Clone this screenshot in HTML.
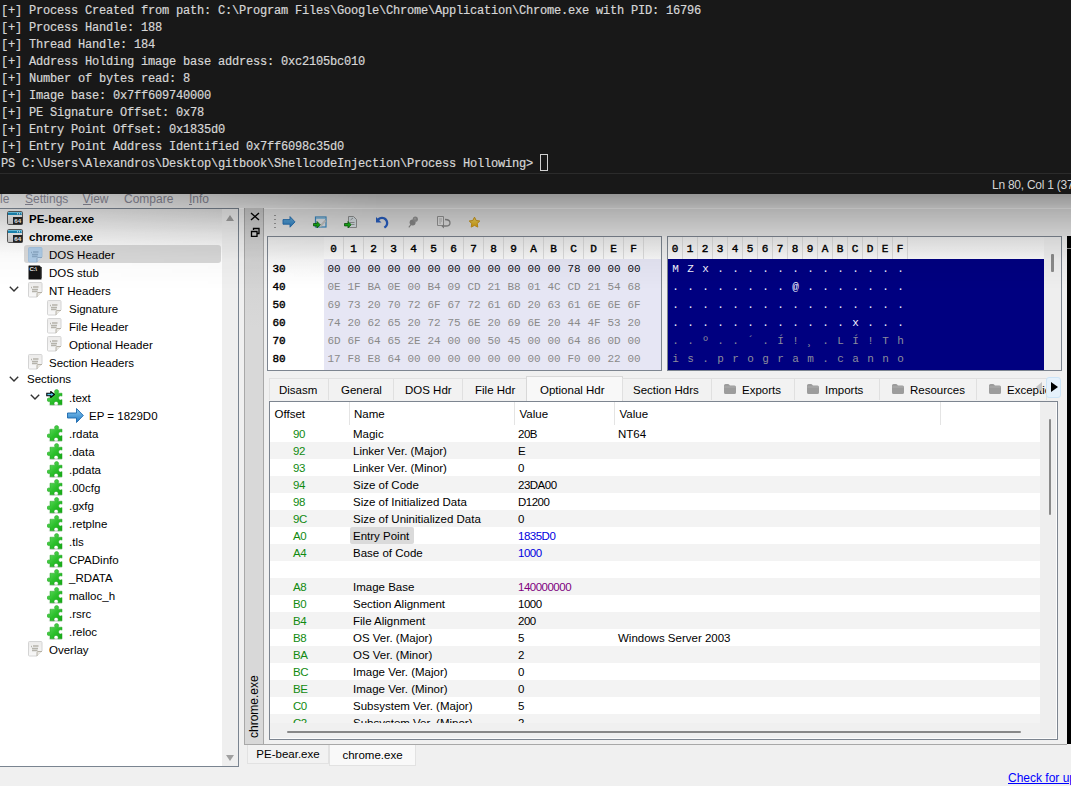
<!DOCTYPE html>
<html><head><meta charset="utf-8">
<style>
*{margin:0;padding:0;box-sizing:border-box}
html,body{width:1071px;height:786px;overflow:hidden;background:#f0f0f0;position:relative;font-family:"Liberation Sans",sans-serif;font-size:12px;color:#000}
.a{position:absolute}
#term{left:0;top:0;width:1071px;height:194px;background:#181818}
.tl{position:absolute;left:1px;font-family:"Liberation Mono",monospace;font-size:12px;letter-spacing:-0.2px;color:#d6d6d6;-webkit-text-stroke:0.2px #d6d6d6;white-space:pre;line-height:17px}
#tsep{left:0;top:173px;width:1071px;height:1px;background:#2b2b2b}
#tstat{left:992px;top:178px;color:#d4d4d4;font-size:12px;letter-spacing:-0.25px;white-space:pre}
#menu{left:0;top:194px;width:1071px;height:14px;background:#ececec;overflow:hidden}
#menu span{position:absolute;top:-2.5px;color:#8a8a98;font-size:12px;line-height:14px}
#menu u{text-decoration:none;position:relative;display:inline-block}
#menu u:after{content:"";position:absolute;left:0;right:0;top:12px;height:1px;background:#8a8a98}
#mline{left:0;top:208px;width:239px;height:1px;background:#4a5566}
#mline2{left:239px;top:208px;width:832px;height:1px;background:#fafafa}
#shadow{left:0;top:194px;width:1071px;height:100px;pointer-events:none;background:linear-gradient(rgba(0,0,0,.37) 0px,rgba(0,0,0,.25) 14px,rgba(0,0,0,.11) 42px,rgba(0,0,0,.03) 66px,rgba(0,0,0,0) 96px);-webkit-mask-image:linear-gradient(to right,rgba(0,0,0,.45),#000 380px)}
#tree{left:0;top:208px;width:239px;height:559px;background:linear-gradient(#e4e4e4 0px,#ffffff 45px);border:1px solid #7a8490;border-left:none;overflow:hidden}
.tt{position:absolute;white-space:pre;font-size:11.5px;line-height:16px;color:#000}
.b{font-weight:bold}
#vstrip{left:244px;top:208px;width:20px;height:537px;background:linear-gradient(#cdcdcd,#d8d8d8 120px);border:1px solid #a8a8a8;border-top:none}
#main{left:264px;top:209px;width:807px;height:536px;background:linear-gradient(#e8e8e8,#e8e8e8 27px,#f0f0f0 28px)}
#hexl{left:267px;top:236px;width:395px;height:135px;border:1px solid #7d8590;background:#e6e6f4;overflow:hidden}
#hexr{left:667px;top:236px;width:395px;height:135px;border:1px solid #7d8590;background:#000080;overflow:hidden}
.hh{position:absolute;height:22px;line-height:24px;text-align:center;font-family:"Liberation Mono",monospace;font-size:11px;color:#000;-webkit-text-stroke:0.4px #000;background:linear-gradient(#f0f0f0,#fafafa);border-right:1px solid #dcdcdc}
.ha{position:absolute;font-family:"Liberation Mono",monospace;font-size:11px;line-height:18px;color:#000;-webkit-text-stroke:0.4px #000}
.hd{position:absolute;font-family:"Liberation Mono",monospace;font-size:11px;line-height:18px;color:#8a8a8a;white-space:pre}
.hd.dk{color:#101018}
.ac{position:absolute;width:15px;text-align:center;font-family:"Liberation Mono",monospace;font-size:11px;line-height:18px;color:#8c8c9c}
.ac.br{color:#f4f4ff}
.tab{position:absolute;overflow:hidden;top:378px;height:22px;background:#f2f2f2;border:1px solid #e0e0e0;border-bottom:none;font-size:11.5px;line-height:23px;white-space:pre;color:#000}
.tab.sel{top:376px;height:25px;background:#f8f8f8;border-color:#d8d8d8}
#tbl{left:269px;top:401px;width:789px;height:339px;border:1px solid #7d8590;background:#f0f0f0;overflow:hidden}
.th{position:absolute;top:3.5px;font-size:11.5px;line-height:16px;white-space:pre}
.tsep{position:absolute;top:0px;width:1px;height:23px;background:#e4e4e4}
.tr{position:absolute;left:0;width:771px;height:17px}
.to,.tn{position:absolute;top:1px;font-size:11.5px;line-height:17px;white-space:pre}
.tv{letter-spacing:-0.5px}
.to{color:#108a10}
.btab{position:absolute;top:744px;height:20px;border:1px solid #e2e2e2;border-top:none;font-size:11.5px;line-height:21px;white-space:pre;text-align:center}
</style></head><body>
<div class="a" id="term">
<div class="tl" style="top:3px">[+] Process Created from path: C:\Program Files\Google\Chrome\Application\Chrome.exe with PID: 16796</div>
<div class="tl" style="top:20px">[+] Process Handle: 188</div>
<div class="tl" style="top:37px">[+] Thread Handle: 184</div>
<div class="tl" style="top:54px">[+] Address Holding image base address: 0xc2105bc010</div>
<div class="tl" style="top:71px">[+] Number of bytes read: 8</div>
<div class="tl" style="top:88px">[+] Image base: 0x7ff609740000</div>
<div class="tl" style="top:105px">[+] PE Signature Offset: 0x78</div>
<div class="tl" style="top:122px">[+] Entry Point Offset: 0x1835d0</div>
<div class="tl" style="top:139px">[+] Entry Point Address Identified 0x7ff6098c35d0</div>
<div class="tl" style="top:156px">PS C:\Users\Alexandros\Desktop\gitbook\ShellcodeInjection\Process Hollowing&gt; </div>
<div class="a" style="left:540px;top:154px;width:8px;height:17px;border:1px solid #d0d0d0"></div>
<div class="a" id="tsep"></div>
<div class="a" id="tstat">Ln 80, Col 1 (37</div>
</div>
<div class="a" id="menu">
<span style="left:0px">le</span>
<span style="left:25px"><u>S</u>ettings</span>
<span style="left:82.5px"><u>V</u>iew</span>
<span style="left:124px">Compare</span>
<span style="left:189px"><u>I</u>nfo</span>
</div>
<div class="a" id="mline"></div><div class="a" id="mline2"></div>
<div class="a" id="tree">
<div class="a" style="left:0;top:-209px;width:239px;height:786px">
<div class="a" style="left:7px;top:211.0px;line-height:0"><svg width="17" height="15" viewBox="0 0 17 15"><defs><linearGradient id="wg" x1="0" y1="0" x2="0" y2="1"><stop offset="0" stop-color="#f4f4f4"/><stop offset="1" stop-color="#c8c8c8"/></linearGradient></defs><rect x="0.5" y="0.5" width="15" height="13" rx="1.2" fill="url(#wg)" stroke="#5a5a5a"/><rect x="1" y="1" width="14" height="3" fill="#1a8ab8"/><path d="M1 1.5h14" stroke="#6cc4e4" stroke-width="1"/><path d="M10 2.8h1M12 2.8h1M14 2.8h0.8" stroke="#fff" stroke-width="1"/><rect x="6" y="6" width="9.5" height="7.5" fill="#262626"/><text x="10.8" y="12.4" font-family="Liberation Sans" font-weight="bold" font-size="6.2" fill="#f4f4f4" text-anchor="middle">64</text></svg></div><div class="tt b" style="left:29px;top:210.5px">PE-bear.exe</div>
<div class="a" style="left:7px;top:229.0px;line-height:0"><svg width="17" height="15" viewBox="0 0 17 15"><defs><linearGradient id="wg" x1="0" y1="0" x2="0" y2="1"><stop offset="0" stop-color="#f4f4f4"/><stop offset="1" stop-color="#c8c8c8"/></linearGradient></defs><rect x="0.5" y="0.5" width="15" height="13" rx="1.2" fill="url(#wg)" stroke="#5a5a5a"/><rect x="1" y="1" width="14" height="3" fill="#1a8ab8"/><path d="M1 1.5h14" stroke="#6cc4e4" stroke-width="1"/><path d="M10 2.8h1M12 2.8h1M14 2.8h0.8" stroke="#fff" stroke-width="1"/><rect x="6" y="6" width="9.5" height="7.5" fill="#262626"/><text x="10.8" y="12.4" font-family="Liberation Sans" font-weight="bold" font-size="6.2" fill="#f4f4f4" text-anchor="middle">64</text></svg></div><div class="tt b" style="left:29px;top:228.5px">chrome.exe</div>
<div class="a" style="left:24px;top:244.5px;width:197px;height:18.5px;background:#d9d9d9;border-radius:3px"></div>
<div class="a" style="left:28px;top:246.5px;line-height:0"><svg width="15" height="16" viewBox="0 0 15 16"><path d="M1.5 0.5h11.5q1 0 1 1v8.5l-5 5h-7.5q-1 0-1-1v-12.5q0-1 1-1z" fill="#aecbe6" stroke="#a4c2de"/><path d="M3 5.5h1M5 5h5.5M4 7.5h6M4 9.5h5.5" stroke="#8aa8c4" stroke-width="1.3"/><path d="M9 15v-3.5q0-1 1-1h4" fill="#c8dcee" stroke="#88a4c0" stroke-width=".9"/></svg></div><div class="tt" style="left:49px;top:246.5px">DOS Header</div>
<div class="a" style="left:28px;top:265.0px;line-height:0"><svg width="14" height="15" viewBox="0 0 14 15"><path d="M1 0.5h10.5l2 2v11.5q0 0.5-.5.5h-12q-.5 0-.5-.5v-13q0-.5.5-.5z" fill="#141414"/><path d="M13 2v11" stroke="#2a2a2a"/><text x="1.5" y="6.3" font-family="Liberation Sans" font-weight="bold" font-size="6" fill="#f0f0f0" letter-spacing="-0.3">C:\</text></svg></div><div class="tt" style="left:49px;top:264.5px">DOS stub</div>
<div class="a" style="left:9px;top:286.0px;line-height:0"><svg width="10" height="6" viewBox="0 0 10 6"><path d="M0.8 0.8l4.2 4.2 4.2-4.2" stroke="#333" stroke-width="1.4" fill="none"/></svg></div><div class="a" style="left:28px;top:282.0px;line-height:0"><svg width="15" height="16" viewBox="0 0 15 16"><defs><linearGradient id="dg" x1="0" y1="0" x2="0" y2="1"><stop offset="0" stop-color="#ecebea"/><stop offset="1" stop-color="#f8f8f8"/></linearGradient></defs><path d="M1.5 0.5h11.5q1 0 1 1v8.5l-5 5h-7.5q-1 0-1-1v-12.5q0-1 1-1z" fill="url(#dg)" stroke="#d4d4d4"/><path d="M3 5.5h1M5 5h5.5M4 7.5h6M4 9.5h5.5" stroke="#b5b3ab" stroke-width="1.3"/><path d="M9 15v-3.5q0-1 1-1h4" fill="#e8e6e0" stroke="#b0aca0" stroke-width=".9"/></svg></div><div class="tt" style="left:49px;top:282.5px">NT Headers</div>
<div class="a" style="left:47px;top:300.0px;line-height:0"><svg width="15" height="16" viewBox="0 0 15 16"><defs><linearGradient id="dg" x1="0" y1="0" x2="0" y2="1"><stop offset="0" stop-color="#ecebea"/><stop offset="1" stop-color="#f8f8f8"/></linearGradient></defs><path d="M1.5 0.5h11.5q1 0 1 1v8.5l-5 5h-7.5q-1 0-1-1v-12.5q0-1 1-1z" fill="url(#dg)" stroke="#d4d4d4"/><path d="M3 5.5h1M5 5h5.5M4 7.5h6M4 9.5h5.5" stroke="#b5b3ab" stroke-width="1.3"/><path d="M9 15v-3.5q0-1 1-1h4" fill="#e8e6e0" stroke="#b0aca0" stroke-width=".9"/></svg></div><div class="tt" style="left:69px;top:300.5px">Signature</div>
<div class="a" style="left:47px;top:318.0px;line-height:0"><svg width="15" height="16" viewBox="0 0 15 16"><defs><linearGradient id="dg" x1="0" y1="0" x2="0" y2="1"><stop offset="0" stop-color="#ecebea"/><stop offset="1" stop-color="#f8f8f8"/></linearGradient></defs><path d="M1.5 0.5h11.5q1 0 1 1v8.5l-5 5h-7.5q-1 0-1-1v-12.5q0-1 1-1z" fill="url(#dg)" stroke="#d4d4d4"/><path d="M3 5.5h1M5 5h5.5M4 7.5h6M4 9.5h5.5" stroke="#b5b3ab" stroke-width="1.3"/><path d="M9 15v-3.5q0-1 1-1h4" fill="#e8e6e0" stroke="#b0aca0" stroke-width=".9"/></svg></div><div class="tt" style="left:69px;top:318.5px">File Header</div>
<div class="a" style="left:47px;top:336.0px;line-height:0"><svg width="15" height="16" viewBox="0 0 15 16"><defs><linearGradient id="dg" x1="0" y1="0" x2="0" y2="1"><stop offset="0" stop-color="#ecebea"/><stop offset="1" stop-color="#f8f8f8"/></linearGradient></defs><path d="M1.5 0.5h11.5q1 0 1 1v8.5l-5 5h-7.5q-1 0-1-1v-12.5q0-1 1-1z" fill="url(#dg)" stroke="#d4d4d4"/><path d="M3 5.5h1M5 5h5.5M4 7.5h6M4 9.5h5.5" stroke="#b5b3ab" stroke-width="1.3"/><path d="M9 15v-3.5q0-1 1-1h4" fill="#e8e6e0" stroke="#b0aca0" stroke-width=".9"/></svg></div><div class="tt" style="left:69px;top:336.5px">Optional Header</div>
<div class="a" style="left:28px;top:354.0px;line-height:0"><svg width="15" height="16" viewBox="0 0 15 16"><defs><linearGradient id="dg" x1="0" y1="0" x2="0" y2="1"><stop offset="0" stop-color="#ecebea"/><stop offset="1" stop-color="#f8f8f8"/></linearGradient></defs><path d="M1.5 0.5h11.5q1 0 1 1v8.5l-5 5h-7.5q-1 0-1-1v-12.5q0-1 1-1z" fill="url(#dg)" stroke="#d4d4d4"/><path d="M3 5.5h1M5 5h5.5M4 7.5h6M4 9.5h5.5" stroke="#b5b3ab" stroke-width="1.3"/><path d="M9 15v-3.5q0-1 1-1h4" fill="#e8e6e0" stroke="#b0aca0" stroke-width=".9"/></svg></div><div class="tt" style="left:49px;top:354.5px">Section Headers</div>
<div class="a" style="left:9px;top:376.0px;line-height:0"><svg width="10" height="6" viewBox="0 0 10 6"><path d="M0.8 0.8l4.2 4.2 4.2-4.2" stroke="#333" stroke-width="1.4" fill="none"/></svg></div><div class="tt" style="left:27px;top:371.0px">Sections</div>
<div class="a" style="left:30px;top:394.0px;line-height:0"><svg width="10" height="6" viewBox="0 0 10 6"><path d="M0.8 0.8l4.2 4.2 4.2-4.2" stroke="#333" stroke-width="1.4" fill="none"/></svg></div><div class="a" style="left:47px;top:388.5px;line-height:0"><svg width="17" height="17" viewBox="0 0 17 17"><defs><linearGradient id="pg" x1="0" y1="0" x2="1" y2="1"><stop offset="0" stop-color="#6ee06e"/><stop offset=".55" stop-color="#2cc02c"/><stop offset="1" stop-color="#14a814"/></linearGradient></defs><ellipse cx="8.5" cy="16" rx="7" ry="1" fill="#000" opacity=".12"/><path d="M3 4.2h5.2c-.5-.5-.7-1-.7-1.6 0-1.2 1-2.1 2.1-2.1s2.1.9 2.1 2.1c0 .6-.2 1.1-.7 1.6h4v3c-.4-.3-.8-.4-1.3-.4-1.2 0-2.1.9-2.1 2.1s.9 2.1 2.1 2.1c.5 0 .9-.1 1.3-.4v5.2h-4.2c.3-.4.4-.8.4-1.3 0-1.2-.9-2.1-2.1-2.1s-2.1.9-2.1 2.1c0 .5.1.9.4 1.3H3v-3.6c-.4.3-.8.4-1.2.4-1.1 0-1.8-.8-1.8-1.8s.7-1.9 1.8-1.9c.4 0 .8.1 1.2.4z" fill="url(#pg)" stroke="#22a022" stroke-width=".5"/></svg></div><div class="tt" style="left:69px;top:389.5px">.text</div>
<div class="a" style="left:46px;top:391px;line-height:0"><svg width="9" height="7" viewBox="0 0 9 7"><path d="M0.8 2.3h4v-1.8l3.6 3-3.6 3v-1.8h-4z" fill="#5ac8f0" stroke="#000" stroke-width="1.1"/></svg></div>
<div class="a" style="left:67px;top:408.0px;line-height:0"><svg width="17" height="15" viewBox="0 0 17 15"><defs><linearGradient id="ag" x1="0" y1="0" x2="0" y2="1"><stop offset="0" stop-color="#8ccbf2"/><stop offset="1" stop-color="#1f78c4"/></linearGradient></defs><path d="M0.5 5h9v-4.5l6.8 7-6.8 7v-4.5h-9z" fill="url(#ag)" stroke="#1a66ac" stroke-width=".9"/></svg></div><div class="tt" style="left:89px;top:407.5px">EP = 1829D0</div>
<div class="a" style="left:47px;top:424.5px;line-height:0"><svg width="17" height="17" viewBox="0 0 17 17"><defs><linearGradient id="pg" x1="0" y1="0" x2="1" y2="1"><stop offset="0" stop-color="#6ee06e"/><stop offset=".55" stop-color="#2cc02c"/><stop offset="1" stop-color="#14a814"/></linearGradient></defs><ellipse cx="8.5" cy="16" rx="7" ry="1" fill="#000" opacity=".12"/><path d="M3 4.2h5.2c-.5-.5-.7-1-.7-1.6 0-1.2 1-2.1 2.1-2.1s2.1.9 2.1 2.1c0 .6-.2 1.1-.7 1.6h4v3c-.4-.3-.8-.4-1.3-.4-1.2 0-2.1.9-2.1 2.1s.9 2.1 2.1 2.1c.5 0 .9-.1 1.3-.4v5.2h-4.2c.3-.4.4-.8.4-1.3 0-1.2-.9-2.1-2.1-2.1s-2.1.9-2.1 2.1c0 .5.1.9.4 1.3H3v-3.6c-.4.3-.8.4-1.2.4-1.1 0-1.8-.8-1.8-1.8s.7-1.9 1.8-1.9c.4 0 .8.1 1.2.4z" fill="url(#pg)" stroke="#22a022" stroke-width=".5"/></svg></div><div class="tt" style="left:69px;top:425.5px">.rdata</div>
<div class="a" style="left:47px;top:442.5px;line-height:0"><svg width="17" height="17" viewBox="0 0 17 17"><defs><linearGradient id="pg" x1="0" y1="0" x2="1" y2="1"><stop offset="0" stop-color="#6ee06e"/><stop offset=".55" stop-color="#2cc02c"/><stop offset="1" stop-color="#14a814"/></linearGradient></defs><ellipse cx="8.5" cy="16" rx="7" ry="1" fill="#000" opacity=".12"/><path d="M3 4.2h5.2c-.5-.5-.7-1-.7-1.6 0-1.2 1-2.1 2.1-2.1s2.1.9 2.1 2.1c0 .6-.2 1.1-.7 1.6h4v3c-.4-.3-.8-.4-1.3-.4-1.2 0-2.1.9-2.1 2.1s.9 2.1 2.1 2.1c.5 0 .9-.1 1.3-.4v5.2h-4.2c.3-.4.4-.8.4-1.3 0-1.2-.9-2.1-2.1-2.1s-2.1.9-2.1 2.1c0 .5.1.9.4 1.3H3v-3.6c-.4.3-.8.4-1.2.4-1.1 0-1.8-.8-1.8-1.8s.7-1.9 1.8-1.9c.4 0 .8.1 1.2.4z" fill="url(#pg)" stroke="#22a022" stroke-width=".5"/></svg></div><div class="tt" style="left:69px;top:443.5px">.data</div>
<div class="a" style="left:47px;top:460.5px;line-height:0"><svg width="17" height="17" viewBox="0 0 17 17"><defs><linearGradient id="pg" x1="0" y1="0" x2="1" y2="1"><stop offset="0" stop-color="#6ee06e"/><stop offset=".55" stop-color="#2cc02c"/><stop offset="1" stop-color="#14a814"/></linearGradient></defs><ellipse cx="8.5" cy="16" rx="7" ry="1" fill="#000" opacity=".12"/><path d="M3 4.2h5.2c-.5-.5-.7-1-.7-1.6 0-1.2 1-2.1 2.1-2.1s2.1.9 2.1 2.1c0 .6-.2 1.1-.7 1.6h4v3c-.4-.3-.8-.4-1.3-.4-1.2 0-2.1.9-2.1 2.1s.9 2.1 2.1 2.1c.5 0 .9-.1 1.3-.4v5.2h-4.2c.3-.4.4-.8.4-1.3 0-1.2-.9-2.1-2.1-2.1s-2.1.9-2.1 2.1c0 .5.1.9.4 1.3H3v-3.6c-.4.3-.8.4-1.2.4-1.1 0-1.8-.8-1.8-1.8s.7-1.9 1.8-1.9c.4 0 .8.1 1.2.4z" fill="url(#pg)" stroke="#22a022" stroke-width=".5"/></svg></div><div class="tt" style="left:69px;top:461.5px">.pdata</div>
<div class="a" style="left:47px;top:478.5px;line-height:0"><svg width="17" height="17" viewBox="0 0 17 17"><defs><linearGradient id="pg" x1="0" y1="0" x2="1" y2="1"><stop offset="0" stop-color="#6ee06e"/><stop offset=".55" stop-color="#2cc02c"/><stop offset="1" stop-color="#14a814"/></linearGradient></defs><ellipse cx="8.5" cy="16" rx="7" ry="1" fill="#000" opacity=".12"/><path d="M3 4.2h5.2c-.5-.5-.7-1-.7-1.6 0-1.2 1-2.1 2.1-2.1s2.1.9 2.1 2.1c0 .6-.2 1.1-.7 1.6h4v3c-.4-.3-.8-.4-1.3-.4-1.2 0-2.1.9-2.1 2.1s.9 2.1 2.1 2.1c.5 0 .9-.1 1.3-.4v5.2h-4.2c.3-.4.4-.8.4-1.3 0-1.2-.9-2.1-2.1-2.1s-2.1.9-2.1 2.1c0 .5.1.9.4 1.3H3v-3.6c-.4.3-.8.4-1.2.4-1.1 0-1.8-.8-1.8-1.8s.7-1.9 1.8-1.9c.4 0 .8.1 1.2.4z" fill="url(#pg)" stroke="#22a022" stroke-width=".5"/></svg></div><div class="tt" style="left:69px;top:479.5px">.00cfg</div>
<div class="a" style="left:47px;top:496.5px;line-height:0"><svg width="17" height="17" viewBox="0 0 17 17"><defs><linearGradient id="pg" x1="0" y1="0" x2="1" y2="1"><stop offset="0" stop-color="#6ee06e"/><stop offset=".55" stop-color="#2cc02c"/><stop offset="1" stop-color="#14a814"/></linearGradient></defs><ellipse cx="8.5" cy="16" rx="7" ry="1" fill="#000" opacity=".12"/><path d="M3 4.2h5.2c-.5-.5-.7-1-.7-1.6 0-1.2 1-2.1 2.1-2.1s2.1.9 2.1 2.1c0 .6-.2 1.1-.7 1.6h4v3c-.4-.3-.8-.4-1.3-.4-1.2 0-2.1.9-2.1 2.1s.9 2.1 2.1 2.1c.5 0 .9-.1 1.3-.4v5.2h-4.2c.3-.4.4-.8.4-1.3 0-1.2-.9-2.1-2.1-2.1s-2.1.9-2.1 2.1c0 .5.1.9.4 1.3H3v-3.6c-.4.3-.8.4-1.2.4-1.1 0-1.8-.8-1.8-1.8s.7-1.9 1.8-1.9c.4 0 .8.1 1.2.4z" fill="url(#pg)" stroke="#22a022" stroke-width=".5"/></svg></div><div class="tt" style="left:69px;top:497.5px">.gxfg</div>
<div class="a" style="left:47px;top:514.5px;line-height:0"><svg width="17" height="17" viewBox="0 0 17 17"><defs><linearGradient id="pg" x1="0" y1="0" x2="1" y2="1"><stop offset="0" stop-color="#6ee06e"/><stop offset=".55" stop-color="#2cc02c"/><stop offset="1" stop-color="#14a814"/></linearGradient></defs><ellipse cx="8.5" cy="16" rx="7" ry="1" fill="#000" opacity=".12"/><path d="M3 4.2h5.2c-.5-.5-.7-1-.7-1.6 0-1.2 1-2.1 2.1-2.1s2.1.9 2.1 2.1c0 .6-.2 1.1-.7 1.6h4v3c-.4-.3-.8-.4-1.3-.4-1.2 0-2.1.9-2.1 2.1s.9 2.1 2.1 2.1c.5 0 .9-.1 1.3-.4v5.2h-4.2c.3-.4.4-.8.4-1.3 0-1.2-.9-2.1-2.1-2.1s-2.1.9-2.1 2.1c0 .5.1.9.4 1.3H3v-3.6c-.4.3-.8.4-1.2.4-1.1 0-1.8-.8-1.8-1.8s.7-1.9 1.8-1.9c.4 0 .8.1 1.2.4z" fill="url(#pg)" stroke="#22a022" stroke-width=".5"/></svg></div><div class="tt" style="left:69px;top:515.5px">.retplne</div>
<div class="a" style="left:47px;top:532.5px;line-height:0"><svg width="17" height="17" viewBox="0 0 17 17"><defs><linearGradient id="pg" x1="0" y1="0" x2="1" y2="1"><stop offset="0" stop-color="#6ee06e"/><stop offset=".55" stop-color="#2cc02c"/><stop offset="1" stop-color="#14a814"/></linearGradient></defs><ellipse cx="8.5" cy="16" rx="7" ry="1" fill="#000" opacity=".12"/><path d="M3 4.2h5.2c-.5-.5-.7-1-.7-1.6 0-1.2 1-2.1 2.1-2.1s2.1.9 2.1 2.1c0 .6-.2 1.1-.7 1.6h4v3c-.4-.3-.8-.4-1.3-.4-1.2 0-2.1.9-2.1 2.1s.9 2.1 2.1 2.1c.5 0 .9-.1 1.3-.4v5.2h-4.2c.3-.4.4-.8.4-1.3 0-1.2-.9-2.1-2.1-2.1s-2.1.9-2.1 2.1c0 .5.1.9.4 1.3H3v-3.6c-.4.3-.8.4-1.2.4-1.1 0-1.8-.8-1.8-1.8s.7-1.9 1.8-1.9c.4 0 .8.1 1.2.4z" fill="url(#pg)" stroke="#22a022" stroke-width=".5"/></svg></div><div class="tt" style="left:69px;top:533.5px">.tls</div>
<div class="a" style="left:47px;top:550.5px;line-height:0"><svg width="17" height="17" viewBox="0 0 17 17"><defs><linearGradient id="pg" x1="0" y1="0" x2="1" y2="1"><stop offset="0" stop-color="#6ee06e"/><stop offset=".55" stop-color="#2cc02c"/><stop offset="1" stop-color="#14a814"/></linearGradient></defs><ellipse cx="8.5" cy="16" rx="7" ry="1" fill="#000" opacity=".12"/><path d="M3 4.2h5.2c-.5-.5-.7-1-.7-1.6 0-1.2 1-2.1 2.1-2.1s2.1.9 2.1 2.1c0 .6-.2 1.1-.7 1.6h4v3c-.4-.3-.8-.4-1.3-.4-1.2 0-2.1.9-2.1 2.1s.9 2.1 2.1 2.1c.5 0 .9-.1 1.3-.4v5.2h-4.2c.3-.4.4-.8.4-1.3 0-1.2-.9-2.1-2.1-2.1s-2.1.9-2.1 2.1c0 .5.1.9.4 1.3H3v-3.6c-.4.3-.8.4-1.2.4-1.1 0-1.8-.8-1.8-1.8s.7-1.9 1.8-1.9c.4 0 .8.1 1.2.4z" fill="url(#pg)" stroke="#22a022" stroke-width=".5"/></svg></div><div class="tt" style="left:69px;top:551.5px">CPADinfo</div>
<div class="a" style="left:47px;top:568.5px;line-height:0"><svg width="17" height="17" viewBox="0 0 17 17"><defs><linearGradient id="pg" x1="0" y1="0" x2="1" y2="1"><stop offset="0" stop-color="#6ee06e"/><stop offset=".55" stop-color="#2cc02c"/><stop offset="1" stop-color="#14a814"/></linearGradient></defs><ellipse cx="8.5" cy="16" rx="7" ry="1" fill="#000" opacity=".12"/><path d="M3 4.2h5.2c-.5-.5-.7-1-.7-1.6 0-1.2 1-2.1 2.1-2.1s2.1.9 2.1 2.1c0 .6-.2 1.1-.7 1.6h4v3c-.4-.3-.8-.4-1.3-.4-1.2 0-2.1.9-2.1 2.1s.9 2.1 2.1 2.1c.5 0 .9-.1 1.3-.4v5.2h-4.2c.3-.4.4-.8.4-1.3 0-1.2-.9-2.1-2.1-2.1s-2.1.9-2.1 2.1c0 .5.1.9.4 1.3H3v-3.6c-.4.3-.8.4-1.2.4-1.1 0-1.8-.8-1.8-1.8s.7-1.9 1.8-1.9c.4 0 .8.1 1.2.4z" fill="url(#pg)" stroke="#22a022" stroke-width=".5"/></svg></div><div class="tt" style="left:69px;top:569.5px">_RDATA</div>
<div class="a" style="left:47px;top:586.5px;line-height:0"><svg width="17" height="17" viewBox="0 0 17 17"><defs><linearGradient id="pg" x1="0" y1="0" x2="1" y2="1"><stop offset="0" stop-color="#6ee06e"/><stop offset=".55" stop-color="#2cc02c"/><stop offset="1" stop-color="#14a814"/></linearGradient></defs><ellipse cx="8.5" cy="16" rx="7" ry="1" fill="#000" opacity=".12"/><path d="M3 4.2h5.2c-.5-.5-.7-1-.7-1.6 0-1.2 1-2.1 2.1-2.1s2.1.9 2.1 2.1c0 .6-.2 1.1-.7 1.6h4v3c-.4-.3-.8-.4-1.3-.4-1.2 0-2.1.9-2.1 2.1s.9 2.1 2.1 2.1c.5 0 .9-.1 1.3-.4v5.2h-4.2c.3-.4.4-.8.4-1.3 0-1.2-.9-2.1-2.1-2.1s-2.1.9-2.1 2.1c0 .5.1.9.4 1.3H3v-3.6c-.4.3-.8.4-1.2.4-1.1 0-1.8-.8-1.8-1.8s.7-1.9 1.8-1.9c.4 0 .8.1 1.2.4z" fill="url(#pg)" stroke="#22a022" stroke-width=".5"/></svg></div><div class="tt" style="left:69px;top:587.5px">malloc_h</div>
<div class="a" style="left:47px;top:604.5px;line-height:0"><svg width="17" height="17" viewBox="0 0 17 17"><defs><linearGradient id="pg" x1="0" y1="0" x2="1" y2="1"><stop offset="0" stop-color="#6ee06e"/><stop offset=".55" stop-color="#2cc02c"/><stop offset="1" stop-color="#14a814"/></linearGradient></defs><ellipse cx="8.5" cy="16" rx="7" ry="1" fill="#000" opacity=".12"/><path d="M3 4.2h5.2c-.5-.5-.7-1-.7-1.6 0-1.2 1-2.1 2.1-2.1s2.1.9 2.1 2.1c0 .6-.2 1.1-.7 1.6h4v3c-.4-.3-.8-.4-1.3-.4-1.2 0-2.1.9-2.1 2.1s.9 2.1 2.1 2.1c.5 0 .9-.1 1.3-.4v5.2h-4.2c.3-.4.4-.8.4-1.3 0-1.2-.9-2.1-2.1-2.1s-2.1.9-2.1 2.1c0 .5.1.9.4 1.3H3v-3.6c-.4.3-.8.4-1.2.4-1.1 0-1.8-.8-1.8-1.8s.7-1.9 1.8-1.9c.4 0 .8.1 1.2.4z" fill="url(#pg)" stroke="#22a022" stroke-width=".5"/></svg></div><div class="tt" style="left:69px;top:605.5px">.rsrc</div>
<div class="a" style="left:47px;top:622.5px;line-height:0"><svg width="17" height="17" viewBox="0 0 17 17"><defs><linearGradient id="pg" x1="0" y1="0" x2="1" y2="1"><stop offset="0" stop-color="#6ee06e"/><stop offset=".55" stop-color="#2cc02c"/><stop offset="1" stop-color="#14a814"/></linearGradient></defs><ellipse cx="8.5" cy="16" rx="7" ry="1" fill="#000" opacity=".12"/><path d="M3 4.2h5.2c-.5-.5-.7-1-.7-1.6 0-1.2 1-2.1 2.1-2.1s2.1.9 2.1 2.1c0 .6-.2 1.1-.7 1.6h4v3c-.4-.3-.8-.4-1.3-.4-1.2 0-2.1.9-2.1 2.1s.9 2.1 2.1 2.1c.5 0 .9-.1 1.3-.4v5.2h-4.2c.3-.4.4-.8.4-1.3 0-1.2-.9-2.1-2.1-2.1s-2.1.9-2.1 2.1c0 .5.1.9.4 1.3H3v-3.6c-.4.3-.8.4-1.2.4-1.1 0-1.8-.8-1.8-1.8s.7-1.9 1.8-1.9c.4 0 .8.1 1.2.4z" fill="url(#pg)" stroke="#22a022" stroke-width=".5"/></svg></div><div class="tt" style="left:69px;top:623.5px">.reloc</div>
<div class="a" style="left:28px;top:641px;line-height:0"><svg width="15" height="16" viewBox="0 0 15 16"><defs><linearGradient id="dg" x1="0" y1="0" x2="0" y2="1"><stop offset="0" stop-color="#ecebea"/><stop offset="1" stop-color="#f8f8f8"/></linearGradient></defs><path d="M1.5 0.5h11.5q1 0 1 1v8.5l-5 5h-7.5q-1 0-1-1v-12.5q0-1 1-1z" fill="url(#dg)" stroke="#d4d4d4"/><path d="M3 5.5h1M5 5h5.5M4 7.5h6M4 9.5h5.5" stroke="#b5b3ab" stroke-width="1.3"/><path d="M9 15v-3.5q0-1 1-1h4" fill="#e8e6e0" stroke="#b0aca0" stroke-width=".9"/></svg></div><div class="tt" style="left:49px;top:641.5px">Overlay</div>
</div>
<div class="a" style="left:222px;top:0;width:16px;height:558px;background:#efefef"></div>
<div class="a" style="left:225.5px;top:6px;width:0;height:0;border-left:4.5px solid transparent;border-right:4.5px solid transparent;border-bottom:6px solid #a0a0a0"></div>
<div class="a" style="left:225.5px;top:546px;width:0;height:0;border-left:4.5px solid transparent;border-right:4.5px solid transparent;border-top:6px solid #a0a0a0"></div>
</div>
<div class="a" id="vstrip"></div>
<svg class="a" style="left:250px;top:212px" width="10" height="9" viewBox="0 0 10 9"><path d="M1 1l8 7M9 1l-8 7" stroke="#000" stroke-width="1.4"/></svg>
<svg class="a" style="left:250px;top:227px" width="10" height="10" viewBox="0 0 10 10"><path d="M3.5 3V1.5h5.5v5H7.5M1.5 4.5h5.5v5h-5.5z" fill="none" stroke="#000" stroke-width="1.3"/></svg>
<div class="a" style="left:247px;top:738px;transform:rotate(-90deg);transform-origin:0 0;font-size:12px;line-height:15px;white-space:pre">chrome.exe</div>
<div class="a" id="main"></div>

<div class="a" style="left:274px;top:215px;width:2px;height:15px;background:repeating-linear-gradient(#9a9a9a 0 1.5px,transparent 1.5px 4px)"></div>
<svg class="a" style="left:282px;top:216px" width="14" height="12" viewBox="0 0 14 12"><defs><linearGradient id="tba" x1="0" y1="0" x2="0" y2="1"><stop offset="0" stop-color="#6ab4e4"/><stop offset="1" stop-color="#2a7cc0"/></linearGradient></defs><path d="M1 3.6h7v-3l5 5.3-5 5.3v-3h-7z" fill="url(#tba)" stroke="#2470b4" stroke-width=".9" stroke-linejoin="round"/></svg>
<svg class="a" style="left:313px;top:216px" width="14" height="12" viewBox="0 0 14 12"><rect x="2.5" y="1" width="10.5" height="10" fill="#e4e8ec" stroke="#3a8ac4" stroke-width="1.2"/><path d="M3 2.2h9.5" stroke="#7ab8e0" stroke-width="1.2"/><path d="M7 10.5l5.5-6" stroke="#c8c8c8" stroke-width="2"/><path d="M0.5 7.5h3.5v-2l3.2 3.2-3.2 3.2v-2h-3.5z" fill="#18b818" stroke="#0a600a" stroke-width=".8"/></svg>
<svg class="a" style="left:344px;top:216px" width="14" height="12" viewBox="0 0 14 12"><path d="M4.5 0.5h5l3 3v8h-8z" fill="#dde6ea" stroke="#8c8c8c" stroke-width=".9"/><path d="M6.5 4l2.5-2M6 6.5h4.5M8 8.5h2.5" stroke="#888" stroke-width=".8"/><path d="M0.5 7.5h3.5v-2l3.2 3.2-3.2 3.2v-2h-3.5z" fill="#18b818" stroke="#0a600a" stroke-width=".8"/></svg>
<svg class="a" style="left:375px;top:216px" width="14" height="13" viewBox="0 0 14 13"><path d="M1 1v5.5h5.5L4.2 4.2C5 3.4 6 3 7 3c2.2 0 4 1.8 4 4 0 1.6-.9 3-2.3 3.7L10 12.5C12 11.4 13.3 9.4 13.3 7 13.3 3.5 10.5.7 7 .7 5.3.7 3.8 1.4 2.7 2.5z" fill="#2a62c8"/></svg>
<svg class="a" style="left:408px;top:216px" width="11" height="12" viewBox="0 0 11 12"><path d="M3 8.5L0.8 11.3" stroke="#8a8a8a" stroke-width="1.1"/><circle cx="4.6" cy="6.4" r="3" fill="#8e8e8e"/><circle cx="7.3" cy="3.2" r="2.6" fill="#9a9a9a"/><circle cx="7" cy="2.8" r="1" fill="#b0b0b0"/></svg>
<svg class="a" style="left:437px;top:216px" width="14" height="13" viewBox="0 0 14 13"><path d="M0.5 0.5h6v9h-6z" fill="#ececec" stroke="#9a9a9a"/><path d="M2 3h3M2 5h3M2 7h2" stroke="#aaa" stroke-width=".8"/><path d="M8 3.5c3 0 5 1.5 5 3.5s-2 3-4 3H6.5" fill="none" stroke="#8c8c8c" stroke-width="1.3"/><path d="M7 8l-2.5 2.2L7 12.5z" fill="#8c8c8c"/></svg>
<svg class="a" style="left:468px;top:216px" width="13" height="12" viewBox="0 0 13 12"><defs><linearGradient id="stg" x1="0" y1="0" x2="0" y2="1"><stop offset="0" stop-color="#fbe26a"/><stop offset="1" stop-color="#e2a80c"/></linearGradient></defs><path d="M6.5 1.2l1.7 3.3 3.6.5-2.6 2.5.6 3.6-3.3-1.7-3.3 1.7.6-3.6L1.2 5l3.6-.5z" fill="url(#stg)" stroke="#d09a18" stroke-width="1" stroke-linejoin="round"/></svg>

<div class="a" id="hexl">
<div class="a" style="left:-268px;top:-237px;width:1071px;height:786px">
<div class="a" style="left:268px;top:237px;width:56px;height:133px;background:linear-gradient(#ececec,#ffffff 40px)"></div>
<div class="hh" style="left:324px;top:237px;width:20px">0</div>
<div class="hh" style="left:344px;top:237px;width:20px">1</div>
<div class="hh" style="left:364px;top:237px;width:20px">2</div>
<div class="hh" style="left:384px;top:237px;width:20px">3</div>
<div class="hh" style="left:404px;top:237px;width:20px">4</div>
<div class="hh" style="left:424px;top:237px;width:20px">5</div>
<div class="hh" style="left:444px;top:237px;width:20px">6</div>
<div class="hh" style="left:464px;top:237px;width:20px">7</div>
<div class="hh" style="left:484px;top:237px;width:20px">8</div>
<div class="hh" style="left:504px;top:237px;width:20px">9</div>
<div class="hh" style="left:524px;top:237px;width:20px">A</div>
<div class="hh" style="left:544px;top:237px;width:20px">B</div>
<div class="hh" style="left:564px;top:237px;width:20px">C</div>
<div class="hh" style="left:584px;top:237px;width:20px">D</div>
<div class="hh" style="left:604px;top:237px;width:20px">E</div>
<div class="hh" style="left:624px;top:237px;width:20px">F</div>
<div class="hh" style="left:644px;top:237px;width:18px"></div>
<div class="ha" style="left:272.5px;top:260px">30</div>
<div class="hd dk" style="left:327.5px;top:260px">00</div>
<div class="hd dk" style="left:347.5px;top:260px">00</div>
<div class="hd dk" style="left:367.5px;top:260px">00</div>
<div class="hd dk" style="left:387.5px;top:260px">00</div>
<div class="hd dk" style="left:407.5px;top:260px">00</div>
<div class="hd dk" style="left:427.5px;top:260px">00</div>
<div class="hd dk" style="left:447.5px;top:260px">00</div>
<div class="hd dk" style="left:467.5px;top:260px">00</div>
<div class="hd dk" style="left:487.5px;top:260px">00</div>
<div class="hd dk" style="left:507.5px;top:260px">00</div>
<div class="hd dk" style="left:527.5px;top:260px">00</div>
<div class="hd dk" style="left:547.5px;top:260px">00</div>
<div class="hd dk" style="left:567.5px;top:260px">78</div>
<div class="hd dk" style="left:587.5px;top:260px">00</div>
<div class="hd dk" style="left:607.5px;top:260px">00</div>
<div class="hd dk" style="left:627.5px;top:260px">00</div>
<div class="ha" style="left:272.5px;top:278px">40</div>
<div class="hd" style="left:327.5px;top:278px">0E</div>
<div class="hd" style="left:347.5px;top:278px">1F</div>
<div class="hd" style="left:367.5px;top:278px">BA</div>
<div class="hd" style="left:387.5px;top:278px">0E</div>
<div class="hd" style="left:407.5px;top:278px">00</div>
<div class="hd" style="left:427.5px;top:278px">B4</div>
<div class="hd" style="left:447.5px;top:278px">09</div>
<div class="hd" style="left:467.5px;top:278px">CD</div>
<div class="hd" style="left:487.5px;top:278px">21</div>
<div class="hd" style="left:507.5px;top:278px">B8</div>
<div class="hd" style="left:527.5px;top:278px">01</div>
<div class="hd" style="left:547.5px;top:278px">4C</div>
<div class="hd" style="left:567.5px;top:278px">CD</div>
<div class="hd" style="left:587.5px;top:278px">21</div>
<div class="hd" style="left:607.5px;top:278px">54</div>
<div class="hd" style="left:627.5px;top:278px">68</div>
<div class="ha" style="left:272.5px;top:296px">50</div>
<div class="hd" style="left:327.5px;top:296px">69</div>
<div class="hd" style="left:347.5px;top:296px">73</div>
<div class="hd" style="left:367.5px;top:296px">20</div>
<div class="hd" style="left:387.5px;top:296px">70</div>
<div class="hd" style="left:407.5px;top:296px">72</div>
<div class="hd" style="left:427.5px;top:296px">6F</div>
<div class="hd" style="left:447.5px;top:296px">67</div>
<div class="hd" style="left:467.5px;top:296px">72</div>
<div class="hd" style="left:487.5px;top:296px">61</div>
<div class="hd" style="left:507.5px;top:296px">6D</div>
<div class="hd" style="left:527.5px;top:296px">20</div>
<div class="hd" style="left:547.5px;top:296px">63</div>
<div class="hd" style="left:567.5px;top:296px">61</div>
<div class="hd" style="left:587.5px;top:296px">6E</div>
<div class="hd" style="left:607.5px;top:296px">6E</div>
<div class="hd" style="left:627.5px;top:296px">6F</div>
<div class="ha" style="left:272.5px;top:314px">60</div>
<div class="hd" style="left:327.5px;top:314px">74</div>
<div class="hd" style="left:347.5px;top:314px">20</div>
<div class="hd" style="left:367.5px;top:314px">62</div>
<div class="hd" style="left:387.5px;top:314px">65</div>
<div class="hd" style="left:407.5px;top:314px">20</div>
<div class="hd" style="left:427.5px;top:314px">72</div>
<div class="hd" style="left:447.5px;top:314px">75</div>
<div class="hd" style="left:467.5px;top:314px">6E</div>
<div class="hd" style="left:487.5px;top:314px">20</div>
<div class="hd" style="left:507.5px;top:314px">69</div>
<div class="hd" style="left:527.5px;top:314px">6E</div>
<div class="hd" style="left:547.5px;top:314px">20</div>
<div class="hd" style="left:567.5px;top:314px">44</div>
<div class="hd" style="left:587.5px;top:314px">4F</div>
<div class="hd" style="left:607.5px;top:314px">53</div>
<div class="hd" style="left:627.5px;top:314px">20</div>
<div class="ha" style="left:272.5px;top:332px">70</div>
<div class="hd" style="left:327.5px;top:332px">6D</div>
<div class="hd" style="left:347.5px;top:332px">6F</div>
<div class="hd" style="left:367.5px;top:332px">64</div>
<div class="hd" style="left:387.5px;top:332px">65</div>
<div class="hd" style="left:407.5px;top:332px">2E</div>
<div class="hd" style="left:427.5px;top:332px">24</div>
<div class="hd" style="left:447.5px;top:332px">00</div>
<div class="hd" style="left:467.5px;top:332px">00</div>
<div class="hd" style="left:487.5px;top:332px">50</div>
<div class="hd" style="left:507.5px;top:332px">45</div>
<div class="hd" style="left:527.5px;top:332px">00</div>
<div class="hd" style="left:547.5px;top:332px">00</div>
<div class="hd" style="left:567.5px;top:332px">64</div>
<div class="hd" style="left:587.5px;top:332px">86</div>
<div class="hd" style="left:607.5px;top:332px">0D</div>
<div class="hd" style="left:627.5px;top:332px">00</div>
<div class="ha" style="left:272.5px;top:350px">80</div>
<div class="hd" style="left:327.5px;top:350px">17</div>
<div class="hd" style="left:347.5px;top:350px">F8</div>
<div class="hd" style="left:367.5px;top:350px">E8</div>
<div class="hd" style="left:387.5px;top:350px">64</div>
<div class="hd" style="left:407.5px;top:350px">00</div>
<div class="hd" style="left:427.5px;top:350px">00</div>
<div class="hd" style="left:447.5px;top:350px">00</div>
<div class="hd" style="left:467.5px;top:350px">00</div>
<div class="hd" style="left:487.5px;top:350px">00</div>
<div class="hd" style="left:507.5px;top:350px">00</div>
<div class="hd" style="left:527.5px;top:350px">00</div>
<div class="hd" style="left:547.5px;top:350px">00</div>
<div class="hd" style="left:567.5px;top:350px">F0</div>
<div class="hd" style="left:587.5px;top:350px">00</div>
<div class="hd" style="left:607.5px;top:350px">22</div>
<div class="hd" style="left:627.5px;top:350px">00</div>

</div></div>
<div class="a" id="hexr">
<div class="a" style="left:-668px;top:-237px;width:1071px;height:786px">
<div class="a" style="left:668px;top:237px;width:393px;height:22px;background:linear-gradient(#f0f0f0,#fafafa)"></div>
<div class="a" style="left:1044px;top:237px;width:17px;height:133px;background:#eeeeee"></div>
<div class="a" style="left:1051px;top:254px;width:3px;height:18px;background:#8a8a8a;border-radius:1px"></div>
<div class="hh" style="left:668px;top:237px;width:15px">0</div>
<div class="hh" style="left:683px;top:237px;width:15px">1</div>
<div class="hh" style="left:698px;top:237px;width:15px">2</div>
<div class="hh" style="left:713px;top:237px;width:15px">3</div>
<div class="hh" style="left:728px;top:237px;width:15px">4</div>
<div class="hh" style="left:743px;top:237px;width:15px">5</div>
<div class="hh" style="left:758px;top:237px;width:15px">6</div>
<div class="hh" style="left:773px;top:237px;width:15px">7</div>
<div class="hh" style="left:788px;top:237px;width:15px">8</div>
<div class="hh" style="left:803px;top:237px;width:15px">9</div>
<div class="hh" style="left:818px;top:237px;width:15px">A</div>
<div class="hh" style="left:833px;top:237px;width:15px">B</div>
<div class="hh" style="left:848px;top:237px;width:15px">C</div>
<div class="hh" style="left:863px;top:237px;width:15px">D</div>
<div class="hh" style="left:878px;top:237px;width:15px">E</div>
<div class="hh" style="left:893px;top:237px;width:15px">F</div>
<div class="ac br" style="left:668px;top:260px">M</div>
<div class="ac br" style="left:683px;top:260px">Z</div>
<div class="ac br" style="left:698px;top:260px">x</div>
<div class="ac br" style="left:713px;top:260px">.</div>
<div class="ac br" style="left:728px;top:260px">.</div>
<div class="ac br" style="left:743px;top:260px">.</div>
<div class="ac br" style="left:758px;top:260px">.</div>
<div class="ac br" style="left:773px;top:260px">.</div>
<div class="ac br" style="left:788px;top:260px">.</div>
<div class="ac br" style="left:803px;top:260px">.</div>
<div class="ac br" style="left:818px;top:260px">.</div>
<div class="ac br" style="left:833px;top:260px">.</div>
<div class="ac br" style="left:848px;top:260px">.</div>
<div class="ac br" style="left:863px;top:260px">.</div>
<div class="ac br" style="left:878px;top:260px">.</div>
<div class="ac br" style="left:893px;top:260px">.</div>
<div class="ac br" style="left:668px;top:278px">.</div>
<div class="ac br" style="left:683px;top:278px">.</div>
<div class="ac br" style="left:698px;top:278px">.</div>
<div class="ac br" style="left:713px;top:278px">.</div>
<div class="ac br" style="left:728px;top:278px">.</div>
<div class="ac br" style="left:743px;top:278px">.</div>
<div class="ac br" style="left:758px;top:278px">.</div>
<div class="ac br" style="left:773px;top:278px">.</div>
<div class="ac br" style="left:788px;top:278px">@</div>
<div class="ac br" style="left:803px;top:278px">.</div>
<div class="ac br" style="left:818px;top:278px">.</div>
<div class="ac br" style="left:833px;top:278px">.</div>
<div class="ac br" style="left:848px;top:278px">.</div>
<div class="ac br" style="left:863px;top:278px">.</div>
<div class="ac br" style="left:878px;top:278px">.</div>
<div class="ac br" style="left:893px;top:278px">.</div>
<div class="ac br" style="left:668px;top:296px">.</div>
<div class="ac br" style="left:683px;top:296px">.</div>
<div class="ac br" style="left:698px;top:296px">.</div>
<div class="ac br" style="left:713px;top:296px">.</div>
<div class="ac br" style="left:728px;top:296px">.</div>
<div class="ac br" style="left:743px;top:296px">.</div>
<div class="ac br" style="left:758px;top:296px">.</div>
<div class="ac br" style="left:773px;top:296px">.</div>
<div class="ac br" style="left:788px;top:296px">.</div>
<div class="ac br" style="left:803px;top:296px">.</div>
<div class="ac br" style="left:818px;top:296px">.</div>
<div class="ac br" style="left:833px;top:296px">.</div>
<div class="ac br" style="left:848px;top:296px">.</div>
<div class="ac br" style="left:863px;top:296px">.</div>
<div class="ac br" style="left:878px;top:296px">.</div>
<div class="ac br" style="left:893px;top:296px">.</div>
<div class="ac br" style="left:668px;top:314px">.</div>
<div class="ac br" style="left:683px;top:314px">.</div>
<div class="ac br" style="left:698px;top:314px">.</div>
<div class="ac br" style="left:713px;top:314px">.</div>
<div class="ac br" style="left:728px;top:314px">.</div>
<div class="ac br" style="left:743px;top:314px">.</div>
<div class="ac br" style="left:758px;top:314px">.</div>
<div class="ac br" style="left:773px;top:314px">.</div>
<div class="ac br" style="left:788px;top:314px">.</div>
<div class="ac br" style="left:803px;top:314px">.</div>
<div class="ac br" style="left:818px;top:314px">.</div>
<div class="ac br" style="left:833px;top:314px">.</div>
<div class="ac br" style="left:848px;top:314px">x</div>
<div class="ac br" style="left:863px;top:314px">.</div>
<div class="ac br" style="left:878px;top:314px">.</div>
<div class="ac br" style="left:893px;top:314px">.</div>
<div class="ac" style="left:668px;top:332px">.</div>
<div class="ac" style="left:683px;top:332px">.</div>
<div class="ac" style="left:698px;top:332px">º</div>
<div class="ac" style="left:713px;top:332px">.</div>
<div class="ac" style="left:728px;top:332px">.</div>
<div class="ac" style="left:743px;top:332px">´</div>
<div class="ac" style="left:758px;top:332px">.</div>
<div class="ac" style="left:773px;top:332px">Í</div>
<div class="ac" style="left:788px;top:332px">!</div>
<div class="ac" style="left:803px;top:332px">¸</div>
<div class="ac" style="left:818px;top:332px">.</div>
<div class="ac" style="left:833px;top:332px">L</div>
<div class="ac" style="left:848px;top:332px">Í</div>
<div class="ac" style="left:863px;top:332px">!</div>
<div class="ac" style="left:878px;top:332px">T</div>
<div class="ac" style="left:893px;top:332px">h</div>
<div class="ac" style="left:668px;top:350px">i</div>
<div class="ac" style="left:683px;top:350px">s</div>
<div class="ac" style="left:698px;top:350px">.</div>
<div class="ac" style="left:713px;top:350px">p</div>
<div class="ac" style="left:728px;top:350px">r</div>
<div class="ac" style="left:743px;top:350px">o</div>
<div class="ac" style="left:758px;top:350px">g</div>
<div class="ac" style="left:773px;top:350px">r</div>
<div class="ac" style="left:788px;top:350px">a</div>
<div class="ac" style="left:803px;top:350px">m</div>
<div class="ac" style="left:818px;top:350px">.</div>
<div class="ac" style="left:833px;top:350px">c</div>
<div class="ac" style="left:848px;top:350px">a</div>
<div class="ac" style="left:863px;top:350px">n</div>
<div class="ac" style="left:878px;top:350px">n</div>
<div class="ac" style="left:893px;top:350px">o</div>
</div></div>
<div class="tab" style="left:269px;width:60px"><span class="a" style="left:9px;top:0px">Disasm</span></div>
<div class="tab" style="left:328px;width:66px"><span class="a" style="left:12px;top:0px">General</span></div>
<div class="tab" style="left:393px;width:70px"><span class="a" style="left:11px;top:0px">DOS Hdr</span></div>
<div class="tab" style="left:462px;width:65px"><span class="a" style="left:12px;top:0px">File Hdr</span></div>
<div class="tab sel" style="left:526px;width:97px"><span class="a" style="left:13px;top:2px">Optional Hdr</span></div>
<div class="tab" style="left:622px;width:90px"><span class="a" style="left:10px;top:0px">Section Hdrs</span></div>
<div class="tab" style="left:711px;width:84px"><span class="a" style="left:12px;top:4.5px;line-height:0"><svg width="12" height="10" viewBox="0 0 12 10"><path d="M0 1.5q0-1.5 1.5-1.5h2.5q.8 0 1.3.7l.6.8h4.6q1.5 0 1.5 1.5v5.5q0 1.5-1.5 1.5h-9q-1.5 0-1.5-1.5z" fill="#9c9c9c"/><path d="M0.3 3h11.4" stroke="#b4b4b4" stroke-width=".8"/></svg></span><span class="a" style="left:30px;top:0px">Exports</span></div>
<div class="tab" style="left:794px;width:86px"><span class="a" style="left:12px;top:4.5px;line-height:0"><svg width="12" height="10" viewBox="0 0 12 10"><path d="M0 1.5q0-1.5 1.5-1.5h2.5q.8 0 1.3.7l.6.8h4.6q1.5 0 1.5 1.5v5.5q0 1.5-1.5 1.5h-9q-1.5 0-1.5-1.5z" fill="#9c9c9c"/><path d="M0.3 3h11.4" stroke="#b4b4b4" stroke-width=".8"/></svg></span><span class="a" style="left:30px;top:0px">Imports</span></div>
<div class="tab" style="left:879px;width:98px"><span class="a" style="left:12px;top:4.5px;line-height:0"><svg width="12" height="10" viewBox="0 0 12 10"><path d="M0 1.5q0-1.5 1.5-1.5h2.5q.8 0 1.3.7l.6.8h4.6q1.5 0 1.5 1.5v5.5q0 1.5-1.5 1.5h-9q-1.5 0-1.5-1.5z" fill="#9c9c9c"/><path d="M0.3 3h11.4" stroke="#b4b4b4" stroke-width=".8"/></svg></span><span class="a" style="left:30px;top:0px">Resources</span></div>
<div class="tab" style="left:976px;width:71px"><span class="a" style="left:12px;top:4.5px;line-height:0"><svg width="12" height="10" viewBox="0 0 12 10"><path d="M0 1.5q0-1.5 1.5-1.5h2.5q.8 0 1.3.7l.6.8h4.6q1.5 0 1.5 1.5v5.5q0 1.5-1.5 1.5h-9q-1.5 0-1.5-1.5z" fill="#9c9c9c"/><path d="M0.3 3h11.4" stroke="#b4b4b4" stroke-width=".8"/></svg></span><span class="a" style="left:30px;top:0px">Exceptions</span></div>
<div class="a" style="left:1036px;top:382px;width:0;height:0;border-top:5px solid transparent;border-bottom:5px solid transparent;border-right:6.5px solid #c4c4c4"></div>
<div class="a" style="left:1046px;top:377px;width:15px;height:21px;background:#e5f1fb;border:1px solid #cce4f7;border-radius:3px"></div>
<div class="a" style="left:1051px;top:382px;width:0;height:0;border-top:5.5px solid transparent;border-bottom:5.5px solid transparent;border-left:7px solid #000"></div>
<div class="a" id="tbl">
<div class="a" style="left:0;top:0;width:772px;height:23px;background:#fff"></div>
<span class="th" style="left:4.5px">Offset</span>
<span class="th" style="left:84px">Name</span>
<span class="th" style="left:249.5px">Value</span>
<span class="th" style="left:349.5px">Value</span>
<div class="tsep" style="left:79px"></div>
<div class="tsep" style="left:244px"></div>
<div class="tsep" style="left:344px"></div>
<div class="tsep" style="left:670px"></div>
<div class="a" style="left:0;top:23px;width:772px;height:298px;overflow:hidden">
<div class="tr" style="top:0px;background:#ffffff">
<span class="to tv" style="left:23px">90</span>
<span class="tn" style="left:83px">Magic</span>
<span class="tn tv" style="left:248px;color:#000">20B</span>
<span class="tn" style="left:348px">NT64</span>
</div>
<div class="tr" style="top:17px;background:#f3f3f3">
<span class="to tv" style="left:23px">92</span>
<span class="tn" style="left:83px">Linker Ver. (Major)</span>
<span class="tn tv" style="left:248px;color:#000">E</span>
</div>
<div class="tr" style="top:34px;background:#ffffff">
<span class="to tv" style="left:23px">93</span>
<span class="tn" style="left:83px">Linker Ver. (Minor)</span>
<span class="tn tv" style="left:248px;color:#000">0</span>
</div>
<div class="tr" style="top:51px;background:#f3f3f3">
<span class="to tv" style="left:23px">94</span>
<span class="tn" style="left:83px">Size of Code</span>
<span class="tn tv" style="left:248px;color:#000">23DA00</span>
</div>
<div class="tr" style="top:68px;background:#ffffff">
<span class="to tv" style="left:23px">98</span>
<span class="tn" style="left:83px">Size of Initialized Data</span>
<span class="tn tv" style="left:248px;color:#000">D1200</span>
</div>
<div class="tr" style="top:85px;background:#f3f3f3">
<span class="to tv" style="left:23px">9C</span>
<span class="tn" style="left:83px">Size of Uninitialized Data</span>
<span class="tn tv" style="left:248px;color:#000">0</span>
</div>
<div class="tr" style="top:102px;background:#ffffff">
<span class="to tv" style="left:23px">A0</span>
<span class="a" style="left:80px;top:0px;width:64px;height:17px;background:#dadada;border-radius:2px"></span>
<span class="tn" style="left:83px">Entry Point</span>
<span class="tn tv" style="left:248px;color:#0000e0">1835D0</span>
</div>
<div class="tr" style="top:119px;background:#f3f3f3">
<span class="to tv" style="left:23px">A4</span>
<span class="tn" style="left:83px">Base of Code</span>
<span class="tn tv" style="left:248px;color:#0000e0">1000</span>
</div>
<div class="tr" style="top:136px;background:#ffffff">
</div>
<div class="tr" style="top:153px;background:#f3f3f3">
<span class="to tv" style="left:23px">A8</span>
<span class="tn" style="left:83px">Image Base</span>
<span class="tn tv" style="left:248px;color:#800080">140000000</span>
</div>
<div class="tr" style="top:170px;background:#ffffff">
<span class="to tv" style="left:23px">B0</span>
<span class="tn" style="left:83px">Section Alignment</span>
<span class="tn tv" style="left:248px;color:#000">1000</span>
</div>
<div class="tr" style="top:187px;background:#f3f3f3">
<span class="to tv" style="left:23px">B4</span>
<span class="tn" style="left:83px">File Alignment</span>
<span class="tn tv" style="left:248px;color:#000">200</span>
</div>
<div class="tr" style="top:204px;background:#ffffff">
<span class="to tv" style="left:23px">B8</span>
<span class="tn" style="left:83px">OS Ver. (Major)</span>
<span class="tn tv" style="left:248px;color:#000">5</span>
<span class="tn" style="left:348px">Windows Server 2003</span>
</div>
<div class="tr" style="top:221px;background:#f3f3f3">
<span class="to tv" style="left:23px">BA</span>
<span class="tn" style="left:83px">OS Ver. (Minor)</span>
<span class="tn tv" style="left:248px;color:#000">2</span>
</div>
<div class="tr" style="top:238px;background:#ffffff">
<span class="to tv" style="left:23px">BC</span>
<span class="tn" style="left:83px">Image Ver. (Major)</span>
<span class="tn tv" style="left:248px;color:#000">0</span>
</div>
<div class="tr" style="top:255px;background:#f3f3f3">
<span class="to tv" style="left:23px">BE</span>
<span class="tn" style="left:83px">Image Ver. (Minor)</span>
<span class="tn tv" style="left:248px;color:#000">0</span>
</div>
<div class="tr" style="top:272px;background:#ffffff">
<span class="to tv" style="left:23px">C0</span>
<span class="tn" style="left:83px">Subsystem Ver. (Major)</span>
<span class="tn tv" style="left:248px;color:#000">5</span>
</div>
<div class="tr" style="top:289px;background:#f3f3f3">
<span class="to tv" style="left:23px">C2</span>
<span class="tn" style="left:83px">Subsystem Ver. (Minor)</span>
<span class="tn tv" style="left:248px;color:#000">2</span>
</div>
</div>
<div class="a" style="left:0;top:321px;width:772px;height:17px;background:#f0f0f0"></div>
<div class="a" style="left:17px;top:328.5px;width:734px;height:2.5px;background:#888;border-radius:1px"></div>
<div class="a" style="left:770px;top:0;width:17px;height:338px;background:#eeeeee"></div>
<div class="a" style="left:778.5px;top:17px;width:2.5px;height:96px;background:#8a8a8a;border-radius:1px"></div>
<div class="a" style="left:786px;top:0;width:1px;height:337px;background:#fcfcfc"></div>
<div class="a" style="left:0;top:336px;width:787px;height:1px;background:#fcfcfc"></div>
</div>
<div class="btab" style="left:247px;width:82px;background:#f2f2f2">PE-bear.exe</div>
<div class="btab" style="left:329px;width:87px;background:#f9f9f9;height:22px;line-height:23px">chrome.exe</div>
<div class="a" style="left:1067px;top:236px;width:4px;height:508px;background:#000"></div>
<div class="a" style="left:244px;top:744px;width:823px;height:1px;background:#a8a8a8"></div>
<div class="a" style="left:1067px;top:248px;width:4px;height:1px;background:#888"></div>
<div class="a" id="shadow"></div>
<div class="a" style="left:1008px;top:771px;font-size:12px;line-height:15px;color:#0000ff;text-decoration:underline;white-space:pre">Check for updates</div>
</body></html>
